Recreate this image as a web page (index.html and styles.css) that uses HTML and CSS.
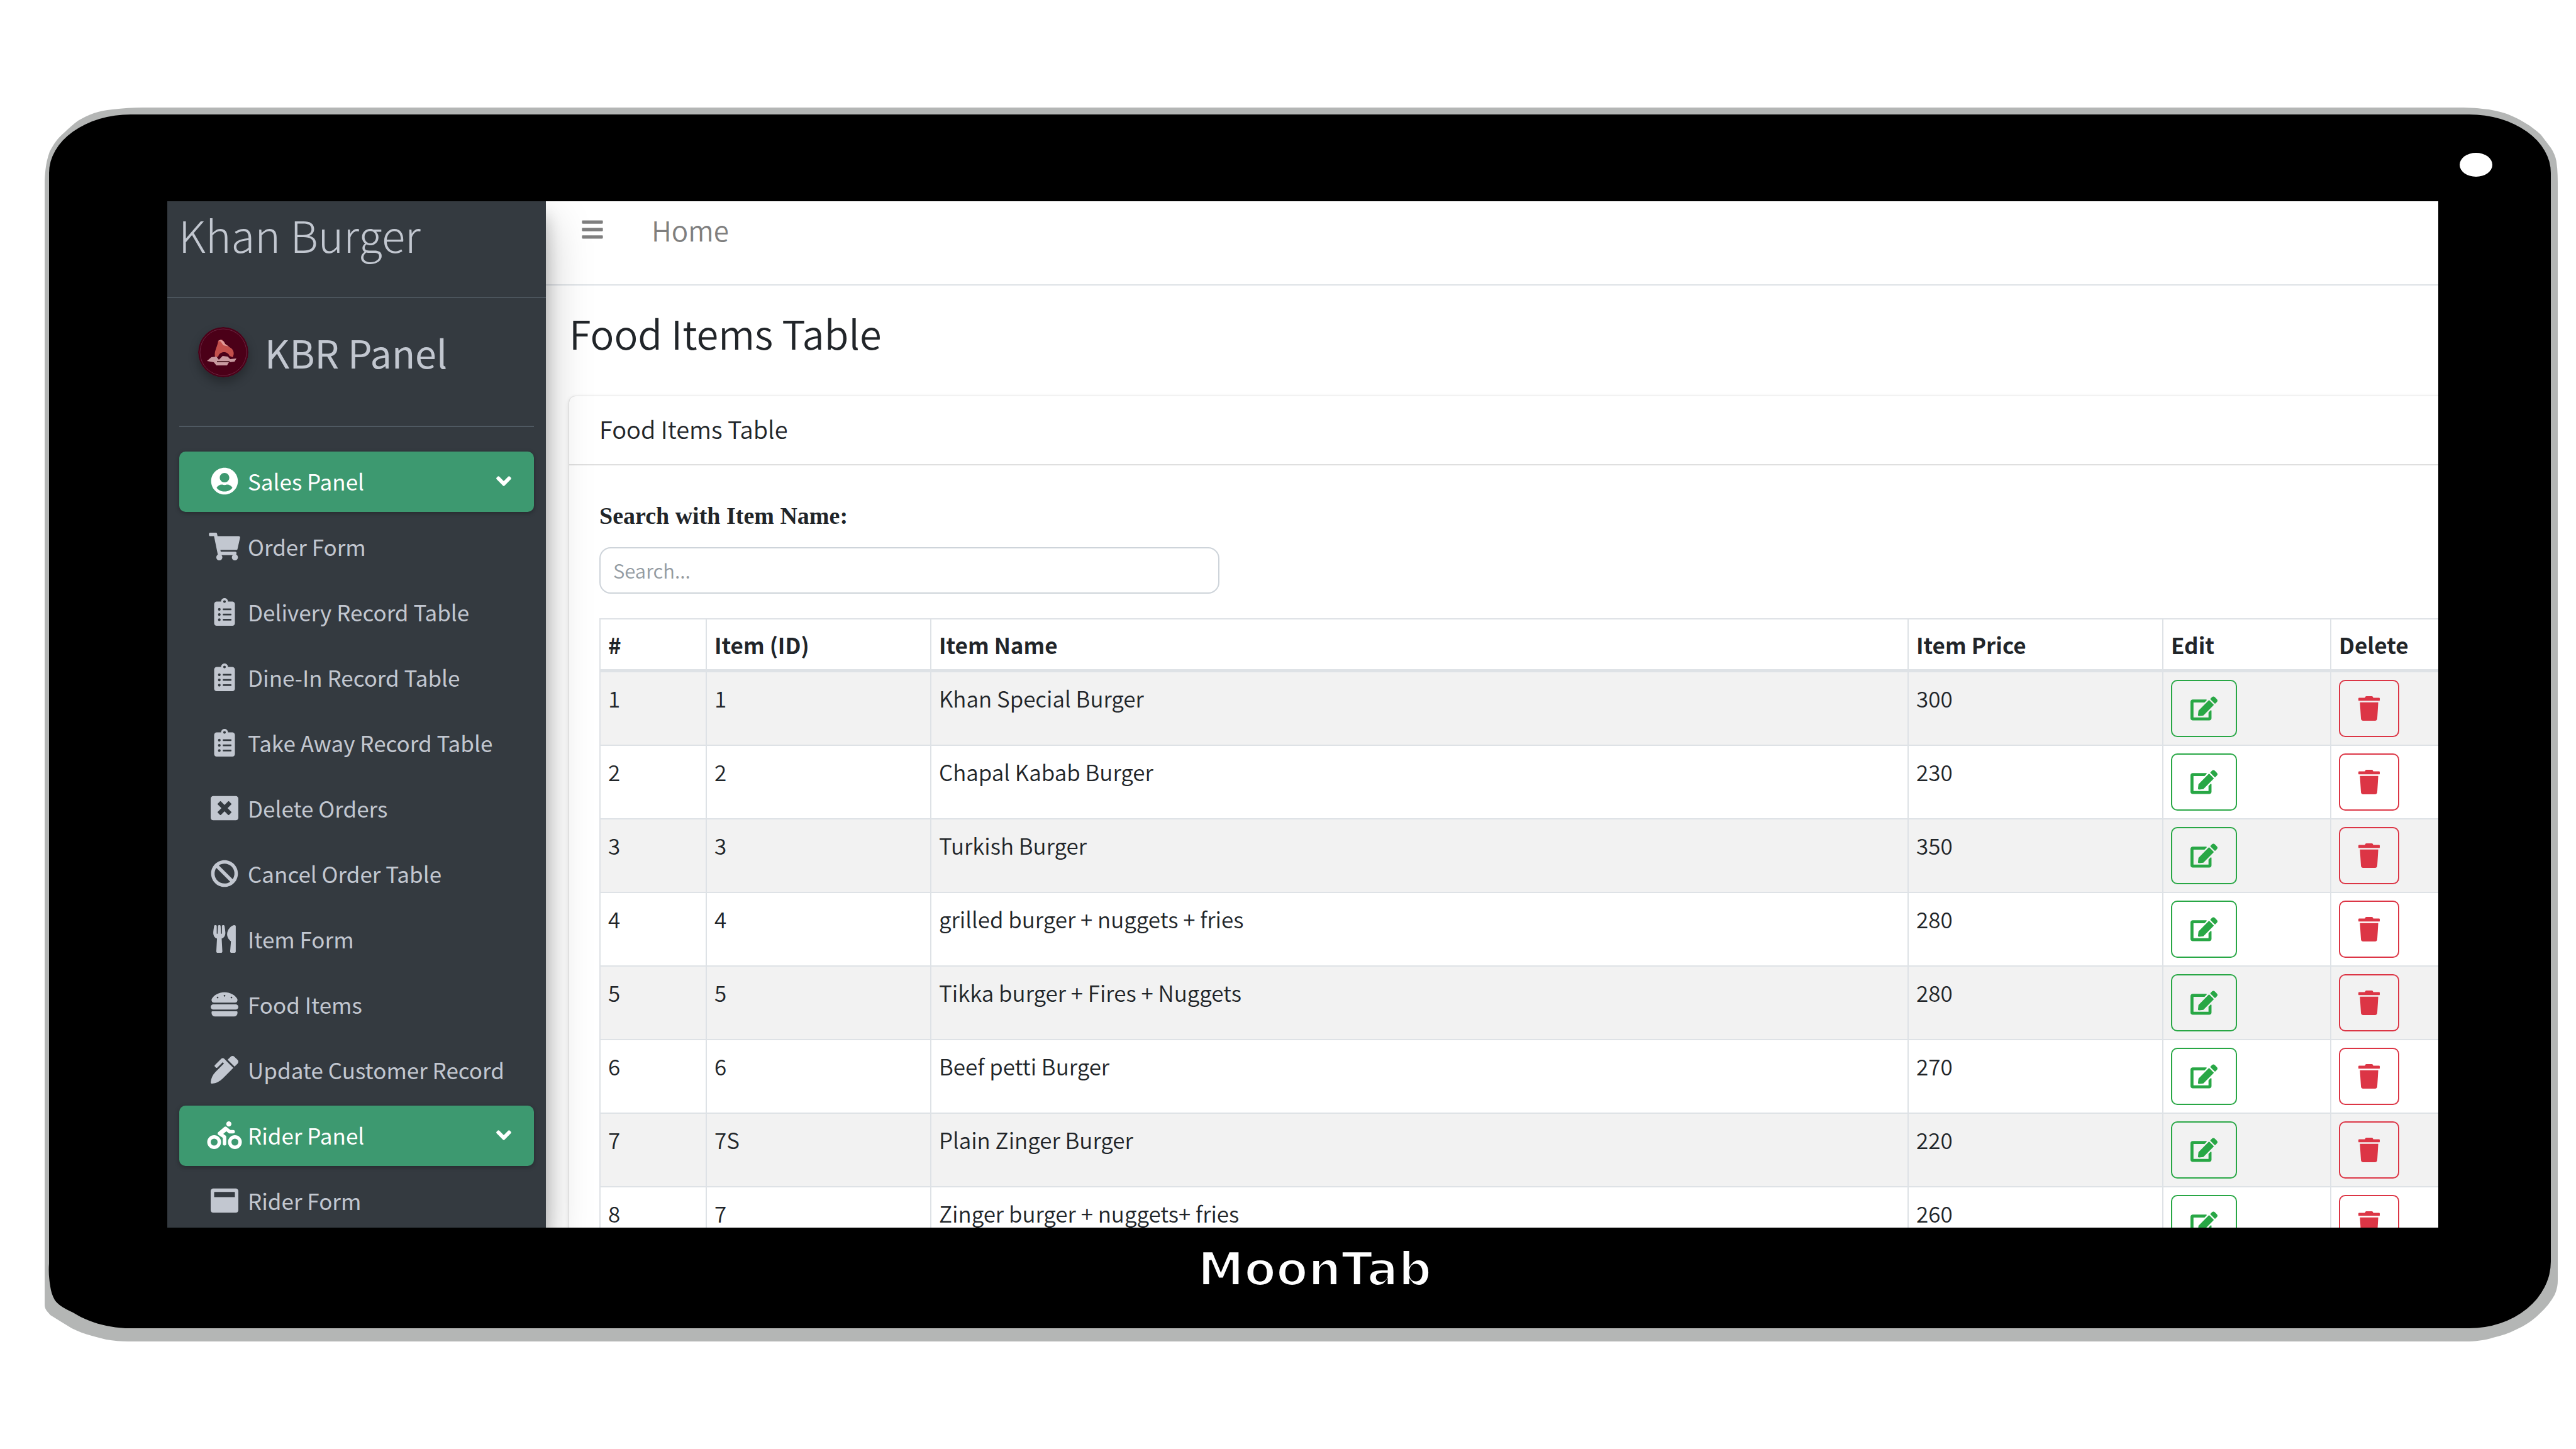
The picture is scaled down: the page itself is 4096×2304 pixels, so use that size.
FILE: index.html
```html
<!DOCTYPE html>
<html lang="en">
<head>
<meta charset="utf-8">
<meta name="viewport" content="width=device-width, initial-scale=1">
<title>Food Items Table</title>
<link rel="stylesheet" href="styles.css">
</head>
<body>
<svg class="sprite" aria-hidden="true">
  <symbol id="user" viewBox="0 0 496 512"><path d="M248 8C111 8 0 119 0 256s111 248 248 248 248-111 248-248S385 8 248 8zm0 96c48.6 0 88 39.4 88 88s-39.4 88-88 88-88-39.4-88-88 39.4-88 88-88zm0 344c-58.7 0-111.3-26.6-146.5-68.2 18.8-35.4 55.6-59.8 98.5-59.8 2.4 0 4.8.4 7.1 1.1 13 4.2 26.6 6.9 40.9 6.9 14.3 0 28-2.7 40.9-6.9 2.3-.7 4.7-1.1 7.1-1.1 42.9 0 79.7 24.4 98.5 59.8C359.3 421.4 306.7 448 248 448z"/></symbol>
  <symbol id="cart" viewBox="0 0 576 512"><path d="M528.12 301.319l47.273-208C578.806 78.301 567.391 64 551.99 64H159.208l-9.166-44.81C147.758 8.021 137.93 0 126.529 0H24C10.745 0 0 10.745 0 24v16c0 13.255 10.745 24 24 24h69.883l70.248 343.435C147.325 417.1 136 435.222 136 456c0 30.928 25.072 56 56 56s56-25.072 56-56c0-15.674-6.447-29.835-16.824-40h209.647C430.447 426.165 424 440.326 424 456c0 30.928 25.072 56 56 56s56-25.072 56-56c0-22.172-12.888-41.332-31.579-50.405l5.517-24.276c3.413-15.018-8.002-29.319-23.403-29.319H218.117l-6.545-32h293.145c11.206 0 20.92-7.754 23.403-18.681z"/></symbol>
  <symbol id="clipboard" viewBox="0 0 384 512"><path d="M336 64h-80c0-35.3-28.7-64-64-64s-64 28.7-64 64H48C21.5 64 0 85.5 0 112v352c0 26.5 21.5 48 48 48h288c26.5 0 48-21.5 48-48V112c0-26.5-21.5-48-48-48zM96 424c-13.3 0-24-10.7-24-24s10.7-24 24-24 24 10.7 24 24-10.7 24-24 24zm0-96c-13.3 0-24-10.7-24-24s10.7-24 24-24 24 10.7 24 24-10.7 24-24 24zm0-96c-13.3 0-24-10.7-24-24s10.7-24 24-24 24 10.7 24 24-10.7 24-24 24zm96-192c13.3 0 24 10.7 24 24s-10.7 24-24 24-24-10.7-24-24 10.7-24 24-24zm128 368c0 4.4-3.6 8-8 8H168c-4.4 0-8-3.6-8-8v-16c0-4.4 3.6-8 8-8h144c4.4 0 8 3.6 8 8v16zm0-96c0 4.4-3.6 8-8 8H168c-4.4 0-8-3.6-8-8v-16c0-4.4 3.6-8 8-8h144c4.4 0 8 3.6 8 8v16zm0-96c0 4.4-3.6 8-8 8H168c-4.4 0-8-3.6-8-8v-16c0-4.4 3.6-8 8-8h144c4.4 0 8 3.6 8 8v16z"/></symbol>
  <symbol id="close" viewBox="0 0 512 512"><path d="M464 32H48C21.5 32 0 53.5 0 80v352c0 26.5 21.5 48 48 48h416c26.5 0 48-21.5 48-48V80c0-26.5-21.5-48-48-48zm-83.6 290.5c4.8 4.8 4.8 12.6 0 17.4l-40.5 40.5c-4.8 4.8-12.6 4.8-17.4 0L256 313.3l-66.5 67.1c-4.8 4.8-12.6 4.8-17.4 0l-40.5-40.5c-4.8-4.8-4.8-12.6 0-17.4l67.1-66.5-67.1-66.5c-4.8-4.8-4.8-12.6 0-17.4l40.5-40.5c4.8-4.8 12.6-4.8 17.4 0l66.5 67.1 66.5-67.1c4.8-4.8 12.6-4.8 17.4 0l40.5 40.5c4.8 4.8 4.8 12.6 0 17.4L313.3 256l67.1 66.5z"/></symbol>
  <symbol id="ban" viewBox="0 0 512 512"><path d="M256 8C119.034 8 8 119.033 8 256s111.034 248 248 248 248-111.034 248-248S392.967 8 256 8zm130.108 117.892c65.448 65.448 70 165.481 20.677 235.637L150.47 105.216c70.204-49.356 170.226-44.735 235.638 20.676zM125.892 386.108c-65.448-65.448-70-165.481-20.677-235.637L361.53 406.784c-70.203 49.356-170.226 44.736-235.638-20.676z"/></symbol>
  <symbol id="utensils" viewBox="0 0 416 512"><path d="M207.9 15.2c.8 4.7 16.1 94.5 16.1 128.8 0 52.3-27.8 89.6-68.9 104.6L168 486.7c.7 13.7-10.2 25.3-24 25.3H80c-13.7 0-24.7-11.5-24-25.3l12.9-238.1C27.7 233.6 0 196.2 0 144 0 109.6 15.3 19.9 16.1 15.2 19.3-5.1 61.4-5.4 64 16.3v141.2c1.3 3.4 15.1 3.2 16 0 1.4-25.3 7.9-139.2 8-141.8 3.3-20.8 44.7-20.8 47.9 0 .2 2.7 6.6 116.5 8 141.8.9 3.2 14.8 3.4 16 0V16.3c2.6-21.6 44.8-21.4 47.9-1.1zm119.2 285.7l-15 185.1c-1.2 14 9.9 26 23.9 26h56c13.3 0 24-10.7 24-24V24c0-13.2-10.7-24-24-24-82.5 0-221.4 178.5-64.9 300.9z"/></symbol>
  <symbol id="burger" viewBox="0 0 512 512"><path d="M464 256H48a48 48 0 0 0 0 96h416a48 48 0 0 0 0-96zm16 128H32a16 16 0 0 0-16 16v16a64 64 0 0 0 64 64h352a64 64 0 0 0 64-64v-16a16 16 0 0 0-16-16zM58.64 224h394.72c34.57 0 54.62-43.9 34.82-75.88C448 83.2 359.55 32.1 256 32c-103.54.1-192 51.2-232.18 116.11C4 180.09 24.07 224 58.64 224zM384 112a16 16 0 1 1-16 16 16 16 0 0 1 16-16zM256 80a16 16 0 1 1-16 16 16 16 0 0 1 16-16zm-128 32a16 16 0 1 1-16 16 16 16 0 0 1 16-16z"/></symbol>
  <symbol id="pen" viewBox="0 0 512 512"><path d="M497.94 74.17l-60.11-60.11c-18.75-18.75-49.16-18.75-67.91 0l-56.55 56.55 128.02 128.02 56.55-56.55c18.75-18.75 18.75-49.15 0-67.91zm-246.8-20.53c-15.62-15.62-40.94-15.62-56.56 0L75.8 172.43c-6.25 6.25-6.25 16.38 0 22.62l22.63 22.63c6.25 6.25 16.38 6.25 22.63 0l101.82-101.82 22.63 22.62L93.95 290.03A327.038 327.038 0 0 0 .17 485.11l-.03.23c-1.7 15.28 11.21 28.2 26.49 26.51a327.02 327.02 0 0 0 195.34-93.8l196.79-196.79-82.77-82.77-84.85-84.85z"/></symbol>
  <symbol id="biking" viewBox="0 0 640 512"><path d="M400 96a48 48 0 1 0-48-48 48 48 0 0 0 48 48zm-4 121a31.9 31.9 0 0 0 20 7h64a32 32 0 0 0 0-64h-52.78L356 103a31.94 31.94 0 0 0-40.81.68l-112 96a32 32 0 0 0 3.08 50.92L288 305.12V416a32 32 0 0 0 64 0V288a32 32 0 0 0-14.25-26.62l-41.36-27.57 58.25-49.92zm116 39a128 128 0 1 0 128 128 128 128 0 0 0-128-128zm0 192a64 64 0 1 1 64-64 64 64 0 0 1-64 64zM128 256a128 128 0 1 0 128 128 128 128 0 0 0-128-128zm0 192a64 64 0 1 1 64-64 64 64 0 0 1-64 64z"/></symbol>
  <symbol id="window" viewBox="0 0 512 512"><path d="M464 32H48C21.5 32 0 53.5 0 80v352c0 26.5 21.5 48 48 48h416c26.5 0 48-21.5 48-48V80c0-26.5-21.5-48-48-48zm-16 160H64v-84c0-6.6 5.4-12 12-12h360c6.6 0 12 5.4 12 12v84z"/></symbol>
  <symbol id="angle" viewBox="0 0 320 512"><path d="M143 352.3L7 216.3c-9.4-9.4-9.4-24.6 0-33.9l22.6-22.6c9.4-9.4 24.6-9.4 33.9 0l96.4 96.4 96.4-96.4c9.4-9.4 24.6-9.4 33.9 0l22.6 22.6c9.4 9.4 9.4 24.6 0 33.9l-136 136c-9.2 9.4-24.4 9.4-33.8 0z"/></symbol>
  <symbol id="bars" viewBox="0 0 448 512"><path d="M16 132h416c8.837 0 16-7.163 16-16V76c0-8.837-7.163-16-16-16H16C7.163 60 0 67.163 0 76v40c0 8.837 7.163 16 16 16zm0 160h416c8.837 0 16-7.163 16-16v-40c0-8.837-7.163-16-16-16H16c-8.837 0-16 7.163-16 16v40c0 8.837 7.163 16 16 16zm0 160h416c8.837 0 16-7.163 16-16v-40c0-8.837-7.163-16-16-16H16c-8.837 0-16 7.163-16 16v40c0 8.837 7.163 16 16 16z"/></symbol>
  <symbol id="edit" viewBox="0 0 576 512"><path d="M402.6 83.2l90.2 90.2c3.8 3.8 3.8 10 0 13.8L274.4 405.6l-92.8 10.3c-12.4 1.4-22.9-9.1-21.5-21.5l10.3-92.8L388.8 83.2c3.8-3.8 10-3.8 13.8 0zm162-22.9l-48.8-48.8c-15.2-15.2-39.9-15.2-55.2 0l-35.4 35.4c-3.8 3.8-3.8 10 0 13.8l90.2 90.2c3.8 3.8 10 3.8 13.8 0l35.4-35.4c15.2-15.3 15.2-40 0-55.2zM384 346.2V448H64V128h229.8c3.2 0 6.2-1.3 8.5-3.5l40-40c7.6-7.6 2.2-20.5-8.5-20.5H48C21.5 64 0 85.5 0 112v352c0 26.5 21.5 48 48 48h352c26.5 0 48-21.5 48-48V306.2c0-10.7-12.9-16-20.5-8.5l-40 40c-2.2 2.3-3.5 5.3-3.5 8.5z"/></symbol>
  <symbol id="trash" viewBox="0 0 448 512"><path d="M432 32H312l-9.4-18.7A24 24 0 0 0 281.1 0H166.8a23.72 23.72 0 0 0-21.4 13.3L136 32H16A16 16 0 0 0 0 48v32a16 16 0 0 0 16 16h416a16 16 0 0 0 16-16V48a16 16 0 0 0-16-16zM53.2 467a48 48 0 0 0 47.9 45h245.8a48 48 0 0 0 47.9-45L416 128H32z"/></symbol>
</svg>

<div class="stage">
  <div class="device">
    <svg class="shell" viewBox="0 0 3996 1962" preserveAspectRatio="none" aria-hidden="true">
      <path fill="#b4b6b5" d="M0 117C1 96 3 84 8 70C14 59 20 49 31 40C38 33 45 27 53 21C70 11 85 5 108 3C125 1 140 0 156 0H3825C3845 0 3860 0 3876 2C3890 3 3903 6 3915 10C3925 14 3936 19 3945 25C3954 30 3962 37 3969 43L3985 64C3990 72 3993 79 3994 87C3996 100 3996 115 3996 129V1865C3996 1874 3994 1881 3991 1888C3985 1899 3977 1909 3967 1918C3957 1928 3944 1937 3930 1943C3918 1949 3906 1953 3893 1956C3880 1960 3865 1962 3849 1962H133C121 1962 110 1961 98 1959C90 1957 82 1955 75 1953C63 1950 53 1946 43 1941L25 1930L9 1920L3 1913C1 1910 0 1907 0 1904Z"/>
      <path d="M137 11H3855A130 93 0 0 1 3985 104V1835A130 106 0 0 1 3855 1941H128C117 1940 107 1939 98 1937C88 1935 79 1932 71 1929C61 1925 53 1921 45 1916C37 1912 30 1909 25 1905C21 1902 18 1899 16 1896C12 1889 10 1882 9 1875C7 1863 6 1851 7 1838V104A130 93 0 0 1 137 11Z"/>
      <ellipse cx="3866" cy="91" rx="26" ry="19" fill="#fff"/>
    </svg>

    <div class="screen">
      <aside class="sidebar">
        <a class="brand" href="#">Khan Burger</a>
        <div class="user">
          <svg class="avatar" viewBox="0 0 80 80" aria-hidden="true">
            <circle cx="40" cy="40" r="40" fill="#4b0018"/>
            <circle cx="40" cy="40" r="37" fill="none" stroke="#6b2440" stroke-width="1"/>
            <path fill="#c4504c" d="M27 48C25 38 30 34 32 22L38 20L44 28L53 34C58 39 57 44 55 48L50 46C47 38 34 38 32 47Z"/>
            <path fill="#e39a98" d="M32 22l4-2 5 3 2 4 6 4-9-2-4-6z"/>
            <path fill="#c99aa0" d="M14 54l7-6 8-1 4 5 6-6 8 1 4 4 10-1-3 5-9 1-3 5H29l-4-5z"/>
            <path fill="#5b2a32" d="M30 54h20v2H30z"/>
          </svg>
          <a class="user-name" href="#">KBR Panel</a>
        </div>
        <nav class="nav">
          <button class="nav-item active" type="button"><svg class="nav-icon"><use href="#user"/></svg><span>Sales Panel</span><svg class="caret"><use href="#angle"/></svg></button>
          <a class="nav-item" href="#"><svg class="nav-icon"><use href="#cart"/></svg><span>Order Form</span></a>
          <a class="nav-item" href="#"><svg class="nav-icon"><use href="#clipboard"/></svg><span>Delivery Record Table</span></a>
          <a class="nav-item" href="#"><svg class="nav-icon"><use href="#clipboard"/></svg><span>Dine-In Record Table</span></a>
          <a class="nav-item" href="#"><svg class="nav-icon"><use href="#clipboard"/></svg><span>Take Away Record Table</span></a>
          <a class="nav-item" href="#"><svg class="nav-icon"><use href="#close"/></svg><span>Delete Orders</span></a>
          <a class="nav-item" href="#"><svg class="nav-icon"><use href="#ban"/></svg><span>Cancel Order Table</span></a>
          <a class="nav-item" href="#"><svg class="nav-icon"><use href="#utensils"/></svg><span>Item Form</span></a>
          <a class="nav-item" href="#"><svg class="nav-icon"><use href="#burger"/></svg><span>Food Items</span></a>
          <a class="nav-item" href="#"><svg class="nav-icon"><use href="#pen"/></svg><span>Update Customer Record</span></a>
          <button class="nav-item active" type="button"><svg class="nav-icon"><use href="#biking"/></svg><span>Rider Panel</span><svg class="caret"><use href="#angle"/></svg></button>
          <a class="nav-item" href="#"><svg class="nav-icon"><use href="#window"/></svg><span>Rider Form</span></a>
        </nav>
      </aside>

      <main class="main">
        <header class="topbar">
          <button class="menu" type="button" aria-label="Toggle menu"><svg><use href="#bars"/></svg></button>
          <a class="home" href="#">Home</a>
        </header>
        <h1 class="title">Food Items Table</h1>
        <section class="card">
          <h2 class="card-header">Food Items Table</h2>
          <div class="card-body">
            <label class="search-label" for="search">Search with Item Name:</label>
            <input class="search" id="search" type="text" placeholder="Search...">
            <table class="items">
              <colgroup><col class="c-num"><col class="c-id"><col><col class="c-price"><col class="c-edit"><col class="c-delete"></colgroup>
              <thead><tr><th>#</th><th>Item (ID)</th><th>Item Name</th><th>Item Price</th><th>Edit</th><th>Delete</th></tr></thead>
              <tbody>
                <tr><td>1</td><td>1</td><td>Khan Special Burger</td><td>300</td><td><button class="btn edit" type="button" aria-label="Edit"><svg><use href="#edit"/></svg></button></td><td><button class="btn delete" type="button" aria-label="Delete"><svg><use href="#trash"/></svg></button></td></tr>
                <tr><td>2</td><td>2</td><td>Chapal Kabab Burger</td><td>230</td><td><button class="btn edit" type="button" aria-label="Edit"><svg><use href="#edit"/></svg></button></td><td><button class="btn delete" type="button" aria-label="Delete"><svg><use href="#trash"/></svg></button></td></tr>
                <tr><td>3</td><td>3</td><td>Turkish Burger</td><td>350</td><td><button class="btn edit" type="button" aria-label="Edit"><svg><use href="#edit"/></svg></button></td><td><button class="btn delete" type="button" aria-label="Delete"><svg><use href="#trash"/></svg></button></td></tr>
                <tr><td>4</td><td>4</td><td>grilled burger + nuggets + fries</td><td>280</td><td><button class="btn edit" type="button" aria-label="Edit"><svg><use href="#edit"/></svg></button></td><td><button class="btn delete" type="button" aria-label="Delete"><svg><use href="#trash"/></svg></button></td></tr>
                <tr><td>5</td><td>5</td><td>Tikka burger + Fires + Nuggets</td><td>280</td><td><button class="btn edit" type="button" aria-label="Edit"><svg><use href="#edit"/></svg></button></td><td><button class="btn delete" type="button" aria-label="Delete"><svg><use href="#trash"/></svg></button></td></tr>
                <tr><td>6</td><td>6</td><td>Beef petti Burger</td><td>270</td><td><button class="btn edit" type="button" aria-label="Edit"><svg><use href="#edit"/></svg></button></td><td><button class="btn delete" type="button" aria-label="Delete"><svg><use href="#trash"/></svg></button></td></tr>
                <tr><td>7</td><td>7S</td><td>Plain Zinger Burger</td><td>220</td><td><button class="btn edit" type="button" aria-label="Edit"><svg><use href="#edit"/></svg></button></td><td><button class="btn delete" type="button" aria-label="Delete"><svg><use href="#trash"/></svg></button></td></tr>
                <tr><td>8</td><td>7</td><td>Zinger burger + nuggets+ fries</td><td>260</td><td><button class="btn edit" type="button" aria-label="Edit"><svg><use href="#edit"/></svg></button></td><td><button class="btn delete" type="button" aria-label="Delete"><svg><use href="#trash"/></svg></button></td></tr>
              </tbody>
            </table>
          </div>
        </section>
      </main>
    </div>
    <p class="maker">MoonTab</p>
  </div>
</div>
</body>
</html>
```
FILE: styles.css
```css
* { box-sizing: border-box; }

body {
  margin: 0;
  background: #fff;
  color: #212529;
  font-family: "Noto Sans CJK SC", "Noto Sans", sans-serif;
  font-size: 35px;
  font-weight: 350;
  line-height: 58px;
}

a { color: inherit; text-decoration: none; }
button { font: inherit; color: inherit; cursor: pointer; }
svg { display: block; fill: currentColor; }
.sprite { position: absolute; width: 0; height: 0; }

/* Tablet */
.stage {
  display: flex;
  height: 100vh;
  padding: 171px 29px 171px 71px;
}
.device {
  position: relative;
  flex: 1;
  display: grid;
  grid-template-rows: minmax(0, 1fr) auto;
  padding: 149px 190px 0 195px;
}
.shell { position: absolute; inset: 0; width: 100%; height: 100%; fill: #000; }
.screen {
  position: relative;
  display: flex;
  overflow: hidden;
  background: #fff;
}
.maker {
  position: relative;
  margin: 0;
  padding: 16px 0 65px 38px;
  color: #fff;
  font: bold 74px/100px "DejaVu Sans", sans-serif;
  text-align: center;
  -webkit-text-stroke: 4px #000;
}

/* Sidebar */
.sidebar {
  position: relative;
  z-index: 1;
  flex: none;
  width: 602px;
  background: #343a40;
  color: #c2c7d0;
  box-shadow: 0 34px 67px rgba(0, 0, 0, .25), 0 24px 24px rgba(0, 0, 0, .22);
}
.brand {
  display: block;
  padding: 0 18px 48px;
  border-bottom: 2px solid #4b545c;
  font-size: 69px;
  font-weight: 300;
  line-height: 104px;
}
.user {
  display: flex;
  align-items: center;
  gap: 26px;
  margin: 0 19px 39px;
  padding: 46px 30px 77px;
  border-bottom: 2px solid #4f5962;
}
.avatar {
  width: 80px;
  height: 80px;
  border-radius: 50%;
  box-shadow: 0 8px 16px rgba(0, 0, 0, .3);
}
.user-name { font-size: 61px; font-weight: 400; line-height: 80px; }
.nav {
  display: flex;
  flex-direction: column;
  gap: 8px;
  padding: 0 19px;
}
.nav-item {
  display: flex;
  align-items: center;
  height: 96px;
  padding: 0 36px 2px 41px;
  border: 0;
  border-radius: 10px;
  background: none;
  font-weight: 400;
  text-align: left;
}
.nav-item.active {
  background: #3d9970;
  color: #fff;
  box-shadow: 0 2px 7px rgba(0, 0, 0, .3);
}
.nav-icon { width: 62px; height: 44px; margin-right: 6px; overflow: visible; }
.caret { width: 24px; height: 38px; margin-left: auto; }

/* Content */
.main { flex: 1; min-width: 0; }
.topbar {
  display: flex;
  align-items: center;
  gap: 77px;
  height: 134px;
  padding: 0 57px 42px;
  border-bottom: 2px solid #dee2e6;
  color: #7f7f7f;
}
.menu { padding: 0; border: 0; background: none; }
.menu svg { width: 34px; height: 38px; }
.home { font-size: 44px; }
.title {
  margin: 0 37px 64px;
  padding-top: 38px;
  font-size: 63px;
  font-weight: 350;
  line-height: 74px;
}
.card {
  margin: 0 -178px 0 37px;
  border-radius: 10px;
  background: #fff;
  box-shadow: 0 0 2px rgba(0, 0, 0, .2), 0 2px 7px rgba(0, 0, 0, .15);
}
.card-header {
  margin: 0;
  padding: 23px 48px 27px;
  border-bottom: 2px solid #dfdfdf;
  font-size: 38px;
  font-weight: 350;
}
.card-body { padding: 50px 48px; }
.search-label {
  display: block;
  margin-bottom: 20px;
  font: bold 38px/60px "Liberation Serif", serif;
}
.search {
  display: block;
  width: 986px;
  height: 74px;
  margin-bottom: 39px;
  padding: 0 20px 2px;
  border: 2px solid #ced4da;
  border-radius: 18px;
  background: #fff;
  color: #495057;
  font: inherit;
  font-size: 31px;
}
.search::placeholder { color: #939ba2; opacity: 1; }

.items {
  width: 100%;
  table-layout: fixed;
  border-collapse: collapse;
}
.c-num { width: 169px; }
.c-id { width: 357px; }
.c-price { width: 405px; }
.c-edit { width: 267px; }
.c-delete { width: 300px; }
.items th, .items td {
  padding: 12px;
  border: 2px solid #dee2e6;
  text-align: left;
  vertical-align: top;
}
.items th { border-bottom-width: 5px; font-weight: 700; line-height: 55px; }
.items td { height: 117px; }
.items tbody tr:nth-child(odd) { background: #f2f2f2; }
.btn {
  display: block;
  height: 91px;
  padding: 0 29px;
  border: 2px solid;
  border-radius: 10px;
  background: none;
}
.btn svg { height: 39px; }
.edit { color: #28a745; }
.edit svg { width: 43px; }
.delete { color: #dc3545; }
.delete svg { width: 34px; }
```
